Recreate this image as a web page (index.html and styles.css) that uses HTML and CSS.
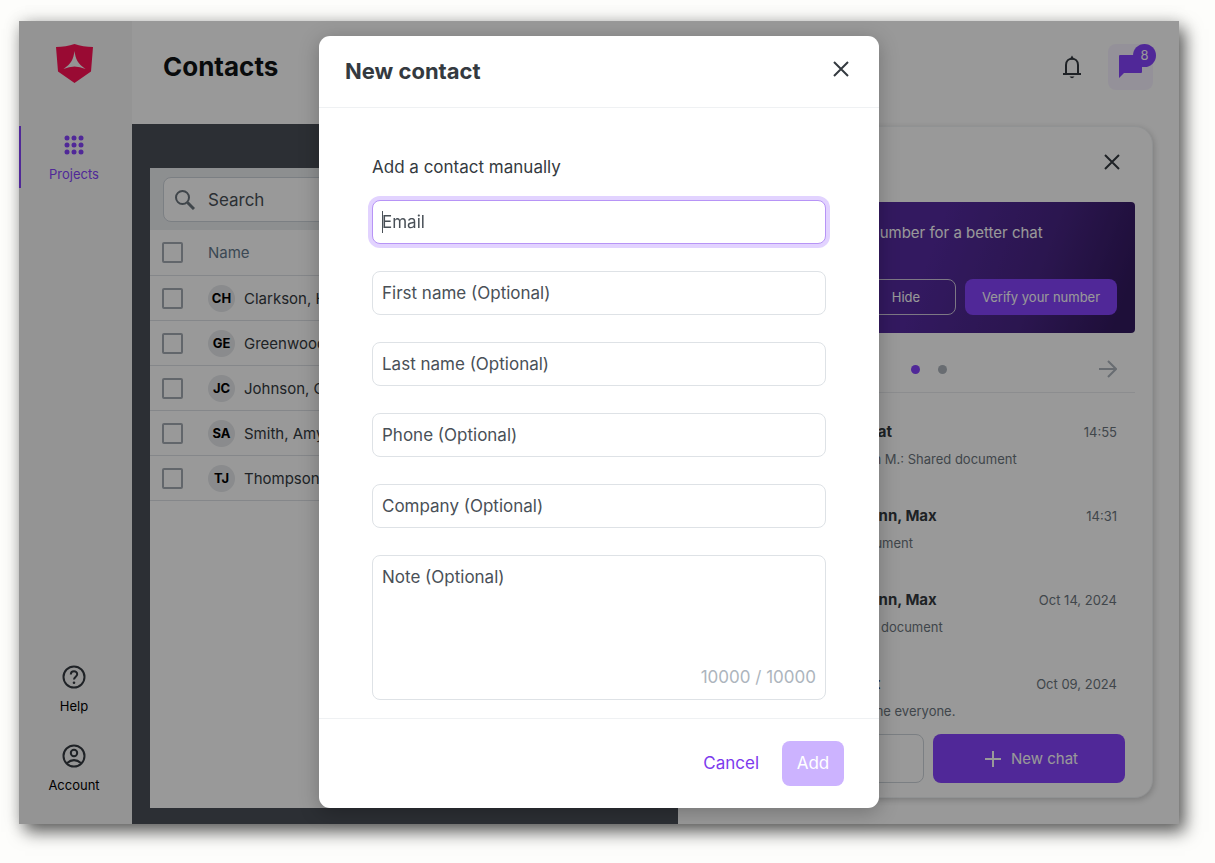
FILE: index.html
```html
<!DOCTYPE html>
<html lang="en">
<head>
    <meta charset="UTF-8">
    <meta name="viewport" content="width=device-width, initial-scale=1.0">
    <title>Contacts</title>
    <link rel="stylesheet" href="styles.css">
</head>
<body>
    <div class="app">
        <nav class="sidebar">
            <svg class="logo" viewBox="0 0 37 39" width="37" height="39">
                <path fill="#ff1255" d="M0 3 Q10 3 18.500 0 Q27 3 37 3 L35 27.500 L18.500 39 L2 27.500 Z"/>
                <path fill="#f7f7f7" d="M18.500 7 C19.500 15 22 20 29.500 25 Q18.500 20 7.500 25 C15 20 17.500 15 18.500 7 Z"/>
            </svg>
            <a class="nav-item active" href="#">
                <svg viewBox="0 0 24 24" width="24" height="24" fill="currentColor">
                    <circle cx="5" cy="5" r="2.500"/><circle cx="12" cy="5" r="2.500"/><circle cx="19" cy="5" r="2.500"/>
                    <circle cx="5" cy="12" r="2.500"/><circle cx="12" cy="12" r="2.500"/><circle cx="19" cy="12" r="2.500"/>
                    <circle cx="5" cy="19" r="2.500"/><circle cx="12" cy="19" r="2.500"/><circle cx="19" cy="19" r="2.500"/>
                </svg>
                Projects
            </a>
            <div class="nav-bottom">
                <a class="nav-item" href="#">
                    <svg viewBox="0 0 24 24" width="24" height="24" fill="none" stroke="#343a40" stroke-width="2">
                        <circle cx="12" cy="12" r="10.500"/>
                        <path d="M8.800 9.500 C8.800 5.200 15.200 5.200 15.200 9.300 C15.200 11.600 12 11.800 12 14.600"/>
                        <circle cx="12" cy="17.700" r="1.300" fill="#343a40" stroke="none"/>
                    </svg>
                    Help
                </a>
                <a class="nav-item" href="#">
                    <svg viewBox="0 0 24 24" width="24" height="24" fill="none" stroke="#343a40" stroke-width="2">
                        <circle cx="12" cy="12" r="10.500"/>
                        <circle cx="12" cy="9" r="3.200"/>
                        <path d="M4.800 19.200 Q12 13 19.200 19.200"/>
                    </svg>
                    Account
                </a>
            </div>
        </nav>

        <div class="content">
            <header class="topbar">
                <h1>Contacts</h1>
                <div class="topbar-actions">
                    <button class="icon-button" aria-label="Notifications">
                        <svg viewBox="0 0 20 24" width="20" height="24" fill="none" stroke="#343a40" stroke-width="2">
                            <path d="M4 19 V10 C4 1.500 16 1.500 16 10 V19"/>
                            <path d="M1 19 H19"/>
                            <path fill="#343a40" stroke="none" d="M7.500 4.500 L10 0.500 L12.500 4.500 Z M7.500 21.500 H12.500 Q10 25 7.500 21.500 Z"/>
                        </svg>
                    </button>
                    <button class="icon-button chat-toggle" aria-label="Chat">
                        <svg viewBox="0 0 23 23" width="23" height="23" fill="#8644fd">
                            <path d="M1 0 H22 Q23 0 23 1 V17 Q23 18 22 18 H5 L0 23 V1 Q0 0 1 0 Z"/>
                        </svg>
                        <span class="badge">8</span>
                    </button>
                </div>
            </header>

            <div class="columns">
                <main class="contacts">
                    <div class="contacts-panel">
                        <div class="search-row">
                            <div class="search">
                                <svg viewBox="0 0 20 20" width="20" height="20" fill="none" stroke="#6c757d" stroke-width="2">
                                    <circle cx="7.500" cy="7.500" r="6.500"/>
                                    <path stroke-width="3" d="M12.500 12.500 L19 19"/>
                                </svg>
                                <input type="search" placeholder="Search" aria-label="Search">
                            </div>
                        </div>
                        <table>
                            <thead>
                                <tr>
                                    <th class="check"><input type="checkbox" aria-label="Select all"></th>
                                    <th>Name</th>
                                </tr>
                            </thead>
                            <tbody>
                                <tr>
                                    <td class="check"><input type="checkbox" aria-label="Select Clarkson"></td>
                                    <td><div class="person"><span class="avatar">CH</span>Clarkson, Henry</div></td>
                                </tr>
                                <tr>
                                    <td class="check"><input type="checkbox" aria-label="Select Greenwood"></td>
                                    <td><div class="person"><span class="avatar">GE</span>Greenwood, Emma</div></td>
                                </tr>
                                <tr>
                                    <td class="check"><input type="checkbox" aria-label="Select Johnson"></td>
                                    <td><div class="person"><span class="avatar">JC</span>Johnson, Chris</div></td>
                                </tr>
                                <tr>
                                    <td class="check"><input type="checkbox" aria-label="Select Smith"></td>
                                    <td><div class="person"><span class="avatar">SA</span>Smith, Amy</div></td>
                                </tr>
                                <tr>
                                    <td class="check"><input type="checkbox" aria-label="Select Thompson"></td>
                                    <td><div class="person"><span class="avatar">TJ</span>Thompson, James</div></td>
                                </tr>
                            </tbody>
                        </table>
                    </div>
                </main>

                <aside class="chat">
                    <div class="chat-card">
                        <div class="chat-head">
                            <button class="icon-button" aria-label="Close chat">
                                <svg viewBox="0 0 16 16" width="16" height="16" stroke="#343a40" stroke-width="2">
                                    <path d="M1 1 L15 15 M15 1 L1 15"/>
                                </svg>
                            </button>
                        </div>
                        <div class="banner">
                            <p>Verify your phone number for a better chat</p>
                            <div class="banner-actions">
                                <button class="hide">Hide</button>
                                <button class="verify">Verify your number</button>
                            </div>
                        </div>
                        <div class="pager">
                            <span class="dot on"></span>
                            <span class="dot"></span>
                            <button class="icon-button next" aria-label="Next">
                                <svg viewBox="0 0 18 18" width="18" height="18" fill="none" stroke="#adb5bd" stroke-width="2">
                                    <path d="M0 9 H17 M9 1 L17 9 L9 17"/>
                                </svg>
                            </button>
                        </div>
                        <ul class="chat-list">
                            <li>
                                <div class="chat-title"><strong>Project chat</strong><time>14:55</time></div>
                                <p>Mustermann M.: Shared document</p>
                            </li>
                            <li>
                                <div class="chat-title"><strong>Mustermann, Max</strong><time>14:31</time></div>
                                <p>Shared document</p>
                            </li>
                            <li>
                                <div class="chat-title"><strong>Mustermann, Max</strong><time>Oct 14, 2024</time></div>
                                <p>Jan: Shared document</p>
                            </li>
                            <li>
                                <div class="chat-title"><strong>Team chat</strong><time>Oct 09, 2024</time></div>
                                <p>Jan: Welcome everyone.</p>
                            </li>
                        </ul>
                        <div class="chat-actions">
                            <button class="outline" aria-label="Search chats"></button>
                            <button class="new-chat">
                                <svg viewBox="0 0 16 16" width="16" height="16" stroke="#fff" stroke-width="2">
                                    <path d="M8 0 V16 M0 8 H16"/>
                                </svg>
                                New chat
                            </button>
                        </div>
                    </div>
                </aside>
            </div>
        </div>

        <div class="overlay">
            <form class="modal" role="dialog" aria-labelledby="modal-title">
                <div class="modal-header">
                    <h2 id="modal-title">New contact</h2>
                    <button type="button" class="icon-button" aria-label="Close">
                        <svg viewBox="0 0 16 16" width="16" height="16" stroke="#343a40" stroke-width="2">
                            <path d="M1 1 L15 15 M15 1 L1 15"/>
                        </svg>
                    </button>
                </div>
                <div class="modal-body">
                    <p>Add a contact manually</p>
                    <div class="field">
                        <input type="email" id="email" autofocus>
                        <label for="email">Email</label>
                    </div>
                    <div class="field">
                        <input type="text" id="first-name">
                        <label for="first-name">First name (Optional)</label>
                    </div>
                    <div class="field">
                        <input type="text" id="last-name">
                        <label for="last-name">Last name (Optional)</label>
                    </div>
                    <div class="field">
                        <input type="tel" id="phone">
                        <label for="phone">Phone (Optional)</label>
                    </div>
                    <div class="field">
                        <input type="text" id="company">
                        <label for="company">Company (Optional)</label>
                    </div>
                    <div class="field">
                        <textarea id="note" maxlength="10000"></textarea>
                        <label for="note">Note (Optional)</label>
                        <span class="counter">10000 / 10000</span>
                    </div>
                </div>
                <div class="modal-footer">
                    <button type="button" class="cancel">Cancel</button>
                    <button type="submit" class="add" disabled>Add</button>
                </div>
            </form>
        </div>
    </div>
</body>
</html>
```
FILE: styles.css
```css
* {
    box-sizing: border-box;
}
body {
    margin: 0;
    min-height: 100vh;
    padding: 21px 36px 39px 19px;
    display: flex;
    background-color: #fdfdfb;
    color: #343a40;
    font-family: Inter, "Liberation Sans", sans-serif;
    font-size: 15px;
}
h1, h2, p, ul {
    margin: 0;
    padding: 0;
}
button, input, textarea {
    font-family: inherit;
}
button {
    border: none;
    background: none;
    padding: 0;
    cursor: pointer;
}
svg {
    display: block;
    flex: none;
}
.app {
    position: relative;
    flex: 1;
    display: flex;
    background-color: #fff;
    box-shadow: 6px 8px 16px rgba(0, 0, 0, 0.6), 0 0 16px rgba(0, 0, 0, 0.15);
}

/* sidebar */
.sidebar {
    width: 113px;
    padding: 23px 0 25px;
    display: flex;
    flex-direction: column;
    background-color: #f7f7f7;
}
.logo {
    margin: 0 auto 43px 37px;
}
.nav-item {
    height: 62px;
    padding-right: 3px;
    display: flex;
    flex-direction: column;
    align-items: center;
    justify-content: center;
    gap: 9px;
    font-size: 13px;
    line-height: 16px;
    color: #000;
    text-decoration: none;
}
.nav-item.active {
    padding-right: 5px;
    color: #8644fd;
    border-left: 2px solid #8644fd;
}
.nav-bottom {
    margin-top: auto;
    display: flex;
    flex-direction: column;
    gap: 17px;
}

/* top bar */
.content {
    flex: 1;
    min-width: 0;
    display: flex;
    flex-direction: column;
}
.topbar {
    height: 103px;
    padding: 0 26px 12px 31px;
    display: flex;
    align-items: center;
    justify-content: space-between;
}
h1 {
    font-size: 26px;
    line-height: 32px;
    color: #101314;
}
.topbar-actions {
    display: flex;
    align-items: center;
    gap: 26px;
}
.icon-button {
    display: flex;
    align-items: center;
    justify-content: center;
}
.chat-toggle {
    position: relative;
    width: 45px;
    height: 46px;
    border-radius: 8px;
    background-color: #f7f2ff;
}
.badge {
    position: absolute;
    top: 0;
    right: -3px;
    width: 23px;
    height: 23px;
    border-radius: 50%;
    background-color: #8644fd;
    color: #fff;
    font-size: 13px;
    line-height: 23px;
}
.columns {
    flex: 1;
    display: flex;
}

/* contacts */
.contacts {
    flex: 1;
    padding: 44px 16px 16px 18px;
    display: flex;
    background-color: #4a4f57;
}
.contacts-panel {
    flex: 1;
    background-color: #fff;
}
.search-row {
    padding: 9px 13px 8px;
    background-color: #ebeef1;
}
.search {
    height: 45px;
    padding: 0 11px;
    display: flex;
    align-items: center;
    gap: 13px;
    border: 1px solid #ced4da;
    border-radius: 8px;
    background-color: #fff;
}
.search input {
    flex: 1;
    border: none;
    outline: none;
    padding: 0;
    font-size: 17px;
}
.search input::placeholder {
    color: #495057;
}
table {
    width: 100%;
    border-collapse: collapse;
}
th, td {
    height: 45px;
    padding: 2px 0 0;
    border-bottom: 1px solid #dee2e6;
    text-align: left;
    font-size: 15px;
    font-weight: 400;
}
th {
    padding: 0;
    color: #64798c;
}
.check {
    width: 58px;
    padding-left: 12px;
}
.check input {
    display: block;
    appearance: none;
    width: 21px;
    height: 21px;
    margin: 0;
    border: 2px solid #a4abb2;
    border-radius: 2px;
}
.person {
    display: flex;
    align-items: center;
    gap: 9px;
}
.avatar {
    width: 27px;
    height: 27px;
    border-radius: 50%;
    background-color: #e6e8eb;
    color: #000;
    font-size: 13px;
    font-weight: 700;
    line-height: 27px;
    text-align: center;
}

/* chat */
.chat {
    width: 501px;
    padding: 2px 26px 26px 19px;
    display: flex;
}
.chat-card {
    flex: 1;
    padding: 0 17px;
    display: flex;
    flex-direction: column;
    border: 1px solid #f1f3f5;
    border-radius: 18px;
    background-color: #fff;
    box-shadow: 1px 2px 6px rgba(0, 0, 0, 0.2);
}
.chat-head {
    height: 75px;
    padding: 0 15px 6px 0;
    display: flex;
    align-items: center;
    justify-content: flex-end;
}
.banner {
    height: 131px;
    padding: 20px 18px 18px;
    display: flex;
    flex-direction: column;
    justify-content: space-between;
    border-radius: 4px;
    background: linear-gradient(110deg, #552aa0 0%, #552aa0 50%, #482584 75%, #331960 95%);
    color: #fff;
}
.banner p {
    padding-left: 7px;
    line-height: 22px;
}
.banner-actions {
    display: flex;
    justify-content: flex-end;
    gap: 9px;
}
.banner button {
    height: 36px;
    border-radius: 8px;
    color: #fff;
    font-size: 13px;
}
.banner .hide {
    width: 100px;
    border: 1px solid #d0c8dc;
}
.banner .verify {
    width: 152px;
    background-color: #8644fd;
}
.pager {
    position: relative;
    height: 60px;
    padding: 26px 0 13px 7px;
    display: flex;
    align-items: center;
    justify-content: center;
    gap: 18px;
    border-bottom: 1px solid #e9ecef;
}
.dot {
    width: 9px;
    height: 9px;
    border-radius: 50%;
    background-color: #adb5bd;
}
.dot.on {
    background-color: #8644fd;
}
.next {
    position: absolute;
    top: 27px;
    right: 18px;
}
.chat-list {
    flex: 1;
    list-style: none;
}
.chat-list li {
    height: 84px;
    padding: 28px 18px 0 89px;
}
.chat-title {
    display: flex;
    justify-content: space-between;
    line-height: 22px;
    margin-bottom: 5px;
}
.chat-list p, .chat-list time {
    font-size: 13px;
    line-height: 22px;
    color: #6c757d;
}
.chat-actions {
    padding: 0 10px 14px 0;
    display: flex;
    gap: 9px;
}
.chat-actions button {
    height: 49px;
    border-radius: 8px;
}
.chat-actions .outline {
    flex: 1;
    border: 1px solid #ced4da;
}
.chat-actions .new-chat {
    width: 192px;
    padding-left: 5px;
    display: flex;
    align-items: center;
    justify-content: center;
    gap: 10px;
    background-color: #8644fd;
    color: #fff;
    font-size: 15px;
}

/* modal */
.overlay {
    position: absolute;
    inset: 0;
    padding-bottom: 2px;
    display: flex;
    align-items: center;
    justify-content: center;
    background-color: rgba(0, 0, 0, 0.4);
}
.modal {
    width: 560px;
    max-width: 100%;
    border-radius: 11px;
    background-color: #fff;
    box-shadow: 0 4px 20px rgba(0, 0, 0, 0.25);
}
.modal-header {
    height: 72px;
    padding: 0 30px 5px 26px;
    display: flex;
    align-items: center;
    justify-content: space-between;
    border-bottom: 1px solid #eff1f3;
}
h2 {
    padding-top: 4px;
    font-size: 22px;
    line-height: 28px;
}
.modal-body {
    padding: 47px 53px 18px;
    display: flex;
    flex-direction: column;
    gap: 27px;
    font-size: 17px;
}
.modal-body p {
    line-height: 24px;
    margin-bottom: -6px;
}
.field {
    position: relative;
    color: #495057;
}
.field input, .field textarea {
    display: block;
    width: 100%;
    height: 44px;
    padding: 0 9px;
    border: 1px solid #dee2e6;
    border-radius: 8px;
    outline: none;
    background-color: #fff;
    font-size: 17px;
}
.field textarea {
    height: 145px;
    resize: none;
}
.field input:focus {
    border-color: #b794f6;
    box-shadow: 0 0 0 4px #e2d3ff;
    caret-color: transparent;
}
.field label {
    position: absolute;
    top: 10px;
    left: 10px;
    line-height: 24px;
    pointer-events: none;
}
/* steady caret in front of the label */
.field input:focus + label::before {
    content: "";
    position: absolute;
    top: 1px;
    left: 0;
    width: 1px;
    height: 22px;
    background-color: #495057;
}
.counter {
    position: absolute;
    right: 10px;
    bottom: 11px;
    line-height: 24px;
    color: #adb5bd;
}
.modal-footer {
    height: 90px;
    padding: 0 35px 0 0;
    display: flex;
    align-items: center;
    justify-content: flex-end;
    gap: 23px;
    border-top: 1px solid #eff1f3;
}
.modal-footer button {
    font-size: 17px;
}
.modal-footer .cancel {
    color: #7c3aed;
}
.modal-footer .add {
    width: 62px;
    height: 45px;
    border-radius: 8px;
    background-color: #ccb3ff;
    color: #fff;
}
```
